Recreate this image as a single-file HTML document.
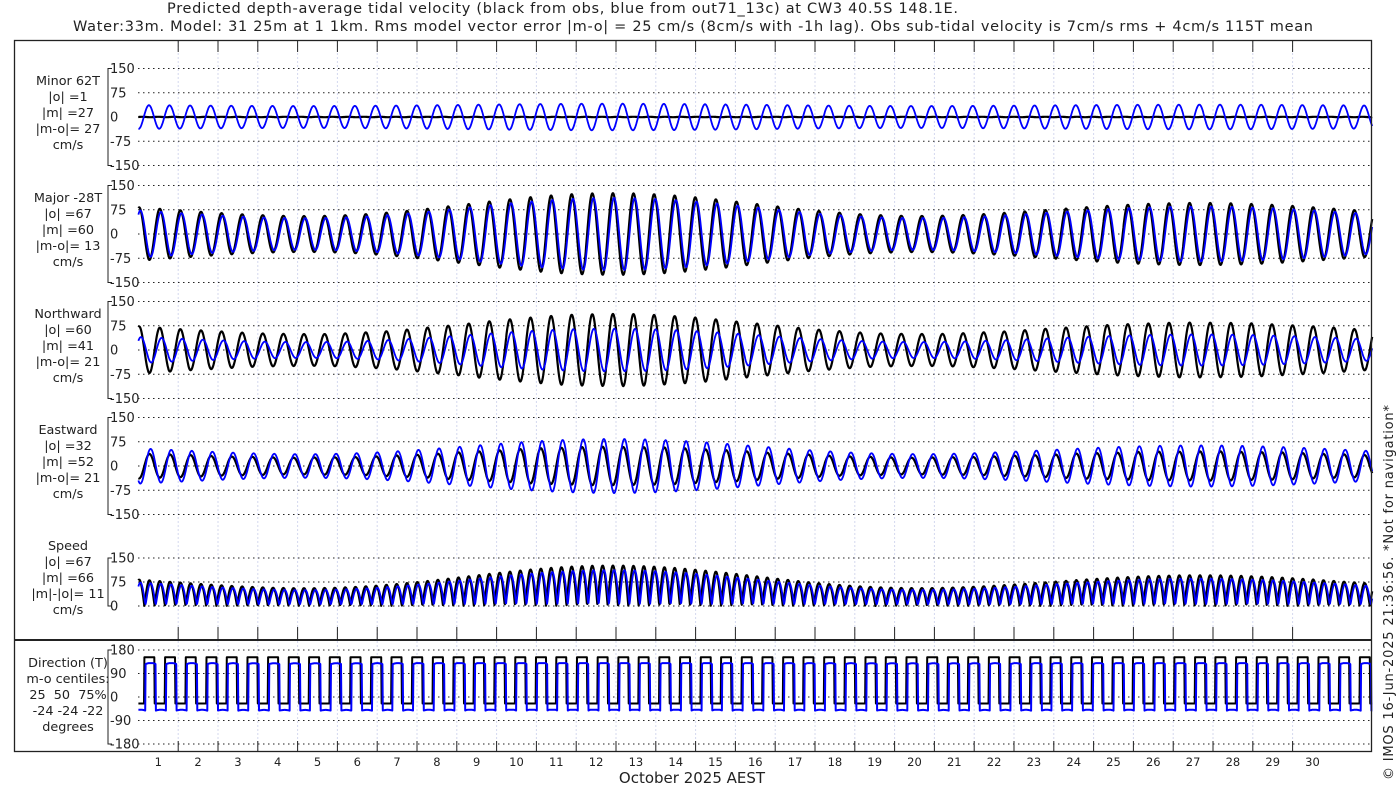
<!DOCTYPE html>
<html><head><meta charset="utf-8"><style>
html,body{margin:0;padding:0;background:#fff;width:1400px;height:800px;overflow:hidden}
svg{display:block;font-family:"DejaVu Sans","Liberation Sans",sans-serif}
</style></head><body>
<svg id="s" width="1400" height="800" xmlns="http://www.w3.org/2000/svg">
<rect width="1400" height="800" fill="#fff"/>
<text x="167" y="13" font-size="14.5" textLength="791" fill="#222">Predicted depth-average tidal velocity (black from obs, blue from out71_13c) at CW3 40.5S 148.1E.</text>
<text x="73" y="31" font-size="14.5" textLength="1240" fill="#222">Water:33m. Model: 31 25m at 1 1km. Rms model vector error |m-o| = 25 cm/s (8cm/s with -1h lag). Obs sub-tidal velocity is 7cm/s rms + 4cm/s 115T mean</text>
<text transform="translate(1393,780) rotate(-90)" font-size="13" textLength="375" fill="#222">© IMOS 16-Jun-2025 21:36:56. *Not for navigation*</text>
<text x="692" y="783" font-size="15" text-anchor="middle" fill="#222">October 2025 AEST</text>
<g id="g"></g>
</svg>
<script>
var g=document.getElementById('g'),h='';
var X0=138.4,DX=39.8,XE=1371;
function X(t){return X0+t*DX;}
for(var k=1;k<=29;k++){var x=(X0+k*DX).toFixed(1);
h+='<line x1="'+x+'" y1="41" x2="'+x+'" y2="751" stroke="#d4d8ee" stroke-width="1" stroke-dasharray="2,2"/>';
h+='<line x1="'+x+'" y1="41" x2="'+x+'" y2="52" stroke="#222"/>';
h+='<line x1="'+x+'" y1="627" x2="'+x+'" y2="640" stroke="#222"/>';
h+='<line x1="'+x+'" y1="741" x2="'+x+'" y2="751" stroke="#222"/>';}
for(var d=1;d<=30;d++){h+='<text x="'+(X0+(d-0.5)*DX).toFixed(1)+'" y="766" font-size="11.5" text-anchor="middle" fill="#222">'+d+'</text>';}
var P=[
 {y0:117,s:48.5/150,labs:['150','75','0','-75','-150'],vals:[150,75,0,-75,-150],lab:['Minor 62T','|o| =1','|m| =27','|m-o|= 27','cm/s'],ly:85},
 {y0:234,s:48.5/150,labs:['150','75','0','-75','-150'],vals:[150,75,0,-75,-150],lab:['Major -28T','|o| =67','|m| =60','|m-o|= 13','cm/s'],ly:202},
 {y0:350,s:48.5/150,labs:['150','75','0','-75','-150'],vals:[150,75,0,-75,-150],lab:['Northward','|o| =60','|m| =41','|m-o|= 21','cm/s'],ly:318},
 {y0:466,s:48.5/150,labs:['150','75','0','-75','-150'],vals:[150,75,0,-75,-150],lab:['Eastward','|o| =32','|m| =52','|m-o|= 21','cm/s'],ly:434},
 {y0:606,s:48/150,labs:['150','75','0'],vals:[150,75,0],lab:['Speed','|o| =67','|m| =66','|m|-|o|= 11','cm/s'],ly:550},
 {y0:697,s:47/180,labs:['180','90','0','-90','-180'],vals:[180,90,0,-90,-180],lab:['Direction (T)','m-o centiles:','25  50  75%','-24 -24 -22','degrees'],ly:667}
];
P.forEach(function(p){
 var top=p.y0-p.vals[0]*p.s,bot=p.y0-p.vals[p.vals.length-1]*p.s;
 h+='<path d="M112,'+top.toFixed(1)+'H108V'+bot.toFixed(1)+'H112" fill="none" stroke="#222"/>';
 p.vals.forEach(function(v,i){var y=(p.y0-v*p.s).toFixed(1);
  h+='<line x1="138" y1="'+y+'" x2="'+XE+'" y2="'+y+'" stroke="#222" stroke-dasharray="1.5,3.5"/>';
  h+='<text x="110" y="'+(+y+4.5)+'" font-size="13" fill="#222">'+p.labs[i]+'</text>';});
 p.lab.forEach(function(s,i){h+='<text x="68" y="'+(p.ly+i*16)+'" font-size="12.8" text-anchor="middle" fill="#222" xml:space="preserve">'+s+'</text>';});
});
var W=2*Math.PI/0.5175;
function env(t){return (1+0.33*Math.cos(2*Math.PI*(t-11.9)/14.77))*(0.88+0.12*Math.cos(2*Math.PI*(t-12)/29.5));}
function ob(t){var e=env(t);return {maj:95*e*Math.cos(W*(t-0.02)),mn:0.6*Math.sin(W*t*1.3)};}
function md(t){var e=env(t),tt=t-0.03;return {maj:84*e*Math.cos(W*(tt-0.02)),mn:38*(0.75+0.25*e)*Math.cos(W*(tt-0.02)-2.6)};}
var a28=-28*Math.PI/180,a62=62*Math.PI/180;
function NE(v){return {n:v.maj*Math.cos(a28)+v.mn*Math.cos(a62),e:v.maj*Math.sin(a28)+v.mn*Math.sin(a62)};}
function path(p,f,col,w){var d='';for(var t=0;t<=31.0001;t+=0.01){var v=f(t);v=Math.max(Math.min(v,p.vals[0]),p.vals[p.vals.length-1]);
 d+=(d?'L':'M')+X(t).toFixed(1)+','+(p.y0-v*p.s).toFixed(1);}
 h+='<path d="'+d+'" fill="none" stroke="'+col+'" stroke-width="'+w+'" stroke-linejoin="round"/>';}
path(P[0],function(t){return ob(t).mn;},'#000',2.2);
path(P[0],function(t){return md(t).mn;},'#0000ff',1.8);
path(P[1],function(t){return ob(t).maj;},'#000',2.2);
path(P[1],function(t){return md(t).maj;},'#0000ff',1.8);
path(P[2],function(t){return NE(ob(t)).n;},'#000',2.2);
path(P[2],function(t){return NE(md(t)).n*0.8;},'#0000ff',1.8);
path(P[3],function(t){return NE(ob(t)).e;},'#000',2.2);
path(P[3],function(t){return md(t).maj*-0.75;},'#0000ff',1.8);
path(P[4],function(t){var v=ob(t);return Math.sqrt(v.maj*v.maj+v.mn*v.mn);},'#000',2.2);
path(P[4],function(t){var v=md(t);return Math.sqrt(v.maj*v.maj+v.mn*v.mn*0.1);},'#0000ff',1.8);
path(P[5],function(t){return ob(t).maj>=0?-25:152;},'#000',2);
path(P[5],function(t){var m=md(t).maj;return m>=0?-52+3*Math.min(m,60)/60:126+4*Math.min(-m,60)/60;},'#0000ff',2);
h+='<rect x="14.5" y="40.5" width="1357" height="711" fill="none" stroke="#222" stroke-width="1.3"/>';
h+='<line x1="14" y1="640" x2="1372" y2="640" stroke="#222" stroke-width="2"/>';
g.innerHTML=h;
</script>
</body></html>
